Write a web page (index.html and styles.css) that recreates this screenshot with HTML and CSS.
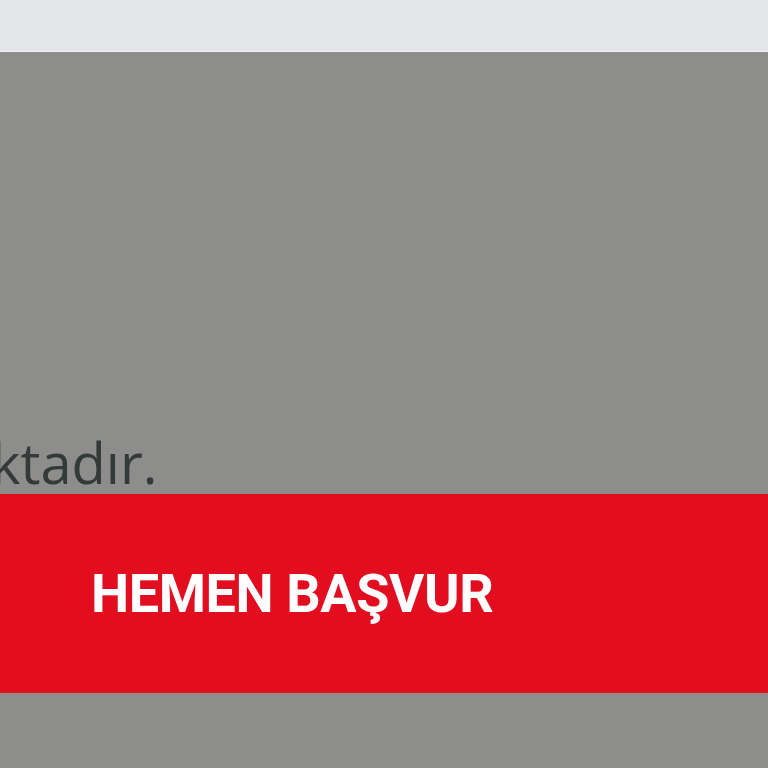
FILE: index.html
```html
<!DOCTYPE html>
<html lang="tr">
<head>
<meta charset="utf-8">
<link rel="stylesheet" href="styles.css">
</head>
<body>
<div class="topbar"></div>
<main class="panel">
  <p class="note">ktadır.</p>
  <a class="cta" href="#">HEMEN BAŞVUR</a>
</main>
</body>
</html>
```
FILE: styles.css
```css
html, body {
  margin: 0;
  padding: 0;
  height: 100%;
  overflow: hidden;
}
body {
  background: #8d8e8c;
  font-family: "Open Sans", "Noto Sans", sans-serif;
}
.topbar {
  height: 51px;
  background: #e5e6e8;
  border-bottom: 1px solid #f2f3f4;
}
.panel {
  display: flex;
  flex-direction: column;
  padding-top: 378px;
}
.note {
  margin: 0 0 0 -9px;
  font-size: 56px;
  line-height: 64px;
  color: #343a3a;
  letter-spacing: 0;
}
.cta {
  display: flex;
  align-items: center;
  height: 199px;
  padding-left: 91px;
  background: #e30d20;
  color: #ffffff;
  text-decoration: none;
  font-family: Roboto, "Liberation Sans", sans-serif;
  font-weight: 700;
  font-size: 54px;
  letter-spacing: -0.4px;
}
```
